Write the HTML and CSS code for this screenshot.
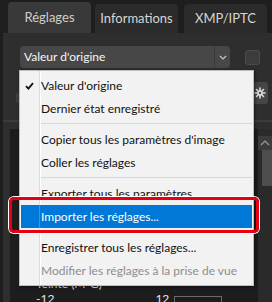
FILE: index.html
```html
<!DOCTYPE html>
<html lang="fr">
<head>
    <meta charset="UTF-8">
    <title>Réglages</title>
    <link rel="stylesheet" href="styles.css">
</head>
<body>

<div class="window">
    <div class="tabs">
        <div class="tab active">Réglages</div>
        <div class="tab">Informations</div>
        <div class="tab">XMP/IPTC</div>
    </div>

    <div class="panel">
        <div class="preset-row">
            <div class="select">
                <span class="select-value">Valeur d'origine</span>
                <span class="select-arrow">
                    <svg width="8" height="5" viewBox="0 0 8 5"><path d="M1 1 L4 4 L7 1" fill="none" stroke="#c8c8c8" stroke-width="1.2"/></svg>
                </span>
            </div>
            <div class="checkbox"></div>
        </div>

        <div class="tool-row">
            <div class="small-btn"></div>
            <div class="gear-btn">
                <svg width="12" height="12" viewBox="0 0 12 12">
                    <g stroke="#e0e0e0" stroke-width="1.6" stroke-linecap="round">
                        <path d="M6 1 V11 M1 6 H11 M2.5 2.5 L9.5 9.5 M9.5 2.5 L2.5 9.5"/>
                    </g>
                    <circle cx="6" cy="6" r="2.6" fill="#e0e0e0"/>
                    <circle cx="6" cy="6" r="1.2" fill="#4a4a4a"/>
                </svg>
            </div>
        </div>

        <div class="divider"></div>

        <div class="section">
            <div class="section-body">
                <div class="section-head"></div>
                <div class="param">
                    <div class="param-name">Teinte (M-G)</div>
                    <div class="param-scale">
                        <span>-12</span>
                        <span class="scale-max">12</span>
                        <span class="param-input"></span>
                    </div>
                </div>
            </div>
            <div class="scroll">
                <div class="collapse">
                    <svg width="10" height="6" viewBox="0 0 10 6"><path d="M1 5 L5 1 L9 5" fill="none" stroke="#9a9a9a" stroke-width="1.2"/></svg>
                </div>
                <div class="scroll-thumb"></div>
            </div>
        </div>
    </div>

    <div class="menu">
        <div class="menu-item checked">
            <svg class="check" width="9" height="8" viewBox="0 0 9 8"><path d="M1 4.2 L3.4 6.6 L8 1.2" fill="none" stroke="#111" stroke-width="1.8"/></svg>
            Valeur d'origine
        </div>
        <div class="menu-item">Dernier état enregistré</div>
        <div class="menu-sep"></div>
        <div class="menu-item">Copier tous les paramètres d'image</div>
        <div class="menu-item">Coller les réglages</div>
        <div class="menu-sep"></div>
        <div class="menu-item">Exporter tous les paramètres...</div>
        <div class="menu-item selected">Importer les réglages...</div>
        <div class="menu-sep"></div>
        <div class="menu-item">Enregistrer tous les réglages...</div>
        <div class="menu-item disabled">Modifier les réglages à la prise de vue</div>
    </div>

    <div class="callout"></div>
</div>

</body>
</html>
```

FILE: styles.css
```css
body {
    margin: 0;
    padding: 0;
    background-color: #1e1e1e;
    font-family: 'Lato', 'Noto Sans', sans-serif;
    overflow: hidden;
}
.window {
    position: relative;
    width: 272px;
    height: 302px;
    overflow: hidden;
}
.tabs {
    display: flex;
    align-items: flex-end;
    height: 33px;
    padding-left: 8px;
    background: #1e1e1e;
}
.tab {
    width: 83px;
    height: 29px;
    margin-right: 4px;
    background: #2b2b2b;
    color: #d6d6d6;
    font-size: 13px;
    line-height: 29px;
    text-align: center;
    border-radius: 4px 4px 0 0;
}
.tab:nth-child(2) {
    margin-right: 6px;
}
.tab.active {
    height: 31px;
    line-height: 30px;
    background: #393939;
    color: #cfcfcf;
}
.panel {
    height: 269px;
    margin-left: 3px;
    background: #2e2e2e;
}
.preset-row {
    display: flex;
    align-items: center;
    padding: 13px 0 0 17px;
}
.select {
    display: flex;
    width: 210px;
    height: 22px;
    background: #474747;
    border-radius: 4px;
}
.select-value {
    flex: 1;
    padding-left: 4px;
    color: #f6f6f6;
    font-size: 12px;
    line-height: 22px;
}
.select-arrow {
    width: 15px;
    display: flex;
    align-items: center;
    justify-content: center;
    border-left: 1px solid #3a3a3a;
}
.checkbox {
    width: 13px;
    height: 13px;
    margin-left: 15px;
    background: #3c3c3c;
    border: 1px solid #4c4c4c;
    border-radius: 3px;
}
.tool-row {
    display: flex;
    justify-content: space-between;
    align-items: center;
    height: 22px;
    margin-top: 14px;
    padding: 0 4px 0 13px;
}
.small-btn {
    width: 12px;
    height: 10px;
    margin-top: 10px;
    background: #3e3e3e;
    border-radius: 2px;
}
.gear-btn {
    display: flex;
    align-items: center;
    justify-content: center;
    width: 16px;
    height: 22px;
    background: #464646;
    border-radius: 3px;
}
.divider {
    height: 2px;
    margin-top: 16px;
    background: #3c3c3c;
}
.section {
    display: flex;
    height: 188px;
    margin-top: 7px;
    padding-left: 7px;
}
.section-body {
    flex: 1;
    background: #1d1d1d;
}
.section-head {
    height: 149px;
}
.param {
    padding-left: 26px;
    color: #e6e6e6;
    font-size: 12px;
}
.param-name {
    line-height: 12px;
}
.param-scale {
    display: flex;
    align-items: center;
    line-height: 12px;
}
.scale-max {
    margin-left: 101px;
}
.param-input {
    width: 46px;
    height: 10px;
    margin: 6px 0 0 5px;
    border: 1px solid #6a6a6a;
}
.scroll {
    width: 14px;
    background: #2a2a2a;
}
.collapse {
    display: flex;
    align-items: center;
    justify-content: center;
    height: 14px;
    margin-top: 7px;
    background: #3c3c3c;
}
.scroll-thumb {
    height: 36px;
    margin-left: 4px;
    background: #4e4e4e;
}

/* popup menu */
.menu {
    position: absolute;
    top: 70px;
    left: 19px;
    width: 233px;
    height: 211px;
    padding-top: 3px;
    background: #f2f2f2;
    border: 1px solid #bdbdbd;
    box-shadow: 1px 1px 3px rgba(0, 0, 0, 0.5);
    font-size: 12px;
    color: #111;
}
.menu::before {
    content: '';
    position: absolute;
    top: 0;
    bottom: 0;
    left: 19px;
    width: 1px;
    background: #dcdcdc;
    border-right: 1px solid #fff;
}
.menu-item {
    position: relative;
    height: 23px;
    margin: 0 1px;
    padding-left: 20px;
    line-height: 23px;
    white-space: nowrap;
}
.menu-item .check {
    position: absolute;
    left: 4px;
    top: 8px;
}
.menu-item.selected {
    background: #0078d7;
    color: #fff;
    z-index: 1;
}
.menu-item.selected::before {
    content: '';
    position: absolute;
    top: 0;
    bottom: 0;
    left: 18px;
    width: 1px;
    background: #3d97e0;
}
.menu-item.disabled {
    color: #8d8d8d;
}
.menu-sep {
    height: 1px;
    margin: 3px 1px 4px 21px;
    background: #d7d7d7;
}

.callout {
    position: absolute;
    top: 197px;
    left: 9px;
    width: 244px;
    height: 30px;
    border: 3px solid #e60012;
    border-radius: 5px;
    box-shadow: 0 0 0 1px #fff;
}
```
